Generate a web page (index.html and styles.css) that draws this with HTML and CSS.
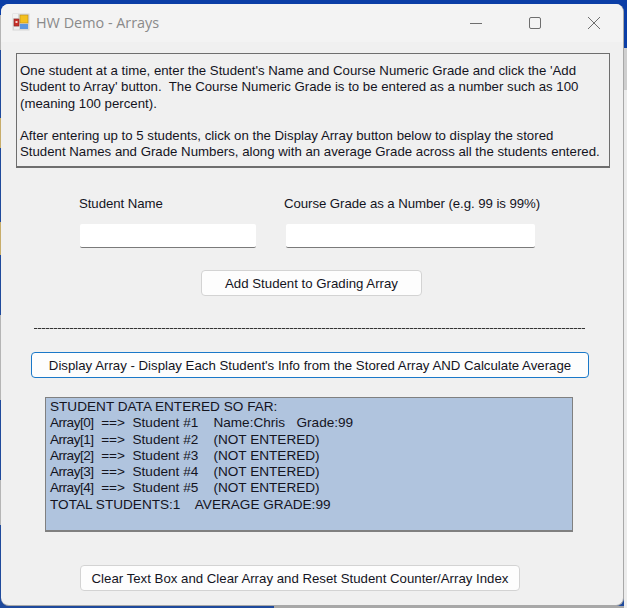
FILE: index.html
```html
<!DOCTYPE html>
<html lang="en">
<head>
<meta charset="utf-8">
<title>HW Demo - Arrays</title>
<link rel="stylesheet" href="styles.css">
</head>
<body>
<div class="window">
  <header class="titlebar">
    <svg class="app-icon" width="18" height="18" viewBox="0 0 18 18">
      <rect x="0.5" y="0.5" width="17" height="17" fill="#d8d8d8"/>
      <rect x="1" y="1" width="5" height="4" fill="#f2f2f2"/>
      <rect x="8" y="2" width="8" height="8" fill="#f4c01e" stroke="#b8891a" stroke-width="0.6"/>
      <rect x="2" y="6" width="5" height="7" fill="#c8302a" stroke="#8c2320" stroke-width="0.6"/>
      <rect x="3.5" y="8" width="2" height="2" fill="#f3d6d0"/>
      <rect x="8" y="11" width="8" height="5" fill="#5b96e0"/>
      <rect x="2" y="14" width="5" height="2.5" fill="#efefef"/>
    </svg>
    <span class="title">HW Demo - Arrays</span>
    <div class="controls">
      <svg width="14" height="14" viewBox="0 0 14 14"><path d="M1 7.5H13" stroke="#6e6e6e" fill="none"/></svg>
      <svg width="14" height="14" viewBox="0 0 14 14"><rect x="1.5" y="1.5" width="11" height="11" rx="1.5" stroke="#6e6e6e" fill="none"/></svg>
      <svg width="14" height="14" viewBox="0 0 14 14"><path d="M1 1L13 13M13 1L1 13" stroke="#6e6e6e" fill="none"/></svg>
    </div>
  </header>
  <main class="content">
    <section class="instructions">
      <p>One student at a time, enter the Student's Name and Course Numeric Grade and click the 'Add<br>Student to Array' button.&nbsp; The Course Numeric Grade is to be entered as a number such as 100<br>(meaning 100 percent).</p>
      <p>After entering up to 5 students, click on the Display Array button below to display the stored<br>Student Names and Grade Numbers, along with an average Grade across all the students entered.</p>
    </section>
    <div class="fields">
      <label class="field field-name">Student Name<input type="text"></label>
      <label class="field field-grade">Course Grade as a Number (e.g. 99 is 99%)<input type="text"></label>
    </div>
    <div class="add-row"><button class="btn btn-add">Add Student to Grading Array</button></div>
    <div class="dashes"></div>
    <button class="btn btn-display">Display Array - Display Each Student's Info from the Stored Array AND Calculate Average</button>
    <pre class="output">STUDENT DATA ENTERED SO FAR:
<span class="idx">Array[0]</span>  ==&gt;  Student #1    Name:Chris   Grade:99
<span class="idx">Array[1]</span>  ==&gt;  Student #2    (NOT ENTERED)
<span class="idx">Array[2]</span>  ==&gt;  Student #3    (NOT ENTERED)
<span class="idx">Array[3]</span>  ==&gt;  Student #4    (NOT ENTERED)
<span class="idx">Array[4]</span>  ==&gt;  Student #5    (NOT ENTERED)
TOTAL STUDENTS:1    AVERAGE GRADE:99</pre>
    <button class="btn btn-clear">Clear Text Box and Clear Array and Reset Student Counter/Array Index</button>
  </main>
</div>
</body>
</html>
```
FILE: styles.css
```css
* { box-sizing: border-box; }
html, body { height: 100%; }
body {
  margin: 0;
  padding: 4px 3px 2px 1px;
  overflow: hidden;
  background:
    linear-gradient(#0b3ea6 0 48px, #cfcfcf 48px 90px, #ececec 90px) right top / 3px 100% no-repeat,
    linear-gradient(90deg, #1f4a9c 0 274px, #a8a8a8 274px) left bottom / 100% 2px no-repeat,
    linear-gradient(#0b3ea6 0 15px, #b5b5b5 15px 50px, #1f4a9c 50px 118px, #c8ad6a 118px 148px, #1f4a9c 148px 222px, #c8ad6a 222px 255px, #1f4a9c 255px 315px, #b5b5b5 315px 400px, #1f4a9c 400px 480px, #b5b5b5 480px 525px, #1f4a9c 525px);
  font-family: "Liberation Sans", Arial, sans-serif;
  font-size: 13.24px;
  color: #14141e;
}
.window {
  height: 602px;
  border-radius: 8px;
  overflow: hidden;
  background: #f0f0f0;
  display: flex;
  flex-direction: column;
  border-right: 1px solid #a8a8a8;
  border-bottom: 1px solid #a8a8a8;
}
.titlebar {
  flex: 0 0 38px;
  background: #f3f3f3;
  display: flex;
  align-items: center;
  padding: 0 22px 0 11px;
}
.app-icon { margin: 0 6px 2px 0; }
.title { margin-bottom: 2px; font-family: "Open Sans", sans-serif; font-size: 14.4px; color: #8a8a8a; }
.controls { margin-left: auto; display: flex; gap: 45px; }
.content { flex: 1; padding: 11px 0 0 15px; display: flex; flex-direction: column; align-items: flex-start; }
.instructions {
  width: 594px;
  height: 115px;
  border: 1px solid #6e6e6e;
  border-width: 1px 1px 2px 1px;
  padding: 9px 0 0 3px;
  line-height: 16.3px;
}
.instructions p { margin: 0 0 16.3px; white-space: nowrap; }
.fields { display: flex; margin: 28px 0 0 63px; }
.field { display: flex; flex-direction: column; white-space: nowrap; letter-spacing: -0.07px; }
.field-name { width: 205px; }
.field-grade { width: 260px; }
.field input {
  margin: 13px 0 0 1px;
  height: 24px;
  border: 0;
  border-bottom: 1px solid #7a7a7a;
  border-radius: 2px;
  background: #fff;
}
.field-name input { width: 176px; }
.field-grade input { width: 249px; margin-left: 2px; }
.add-row { margin: 22px 0 0 185px; }
.btn {
  display: block;
  height: 26px;
  padding: 0;
  border: 1px solid #d3d3d3;
  border-radius: 4px;
  background: #fdfdfd;
  font: inherit;
  color: inherit;
}
.btn-add { width: 221px; }
.dashes {
  margin: 32px 0 0 18px;
  width: 551px;
  height: 1px;
  background: repeating-linear-gradient(90deg, #333 0 3px, #aaa 3px 4px);
}
.btn-display { margin: 23px 0 0 15px; width: 558px; border-color: #1a78c8; }
.output {
  margin: 19px 0 0 29px;
  width: 528px;
  height: 135px;
  border: 1px solid #808080;
  border-bottom-width: 2px;
  background: #b0c4de;
  padding: 1px 0 0 4px;
  font: inherit;
  font-size: 13.6px;
  line-height: 16.3px;
  white-space: pre;
}
.idx { letter-spacing: -0.5px; }
.btn-clear { margin: 33px 0 0 64px; width: 440px; }
```
